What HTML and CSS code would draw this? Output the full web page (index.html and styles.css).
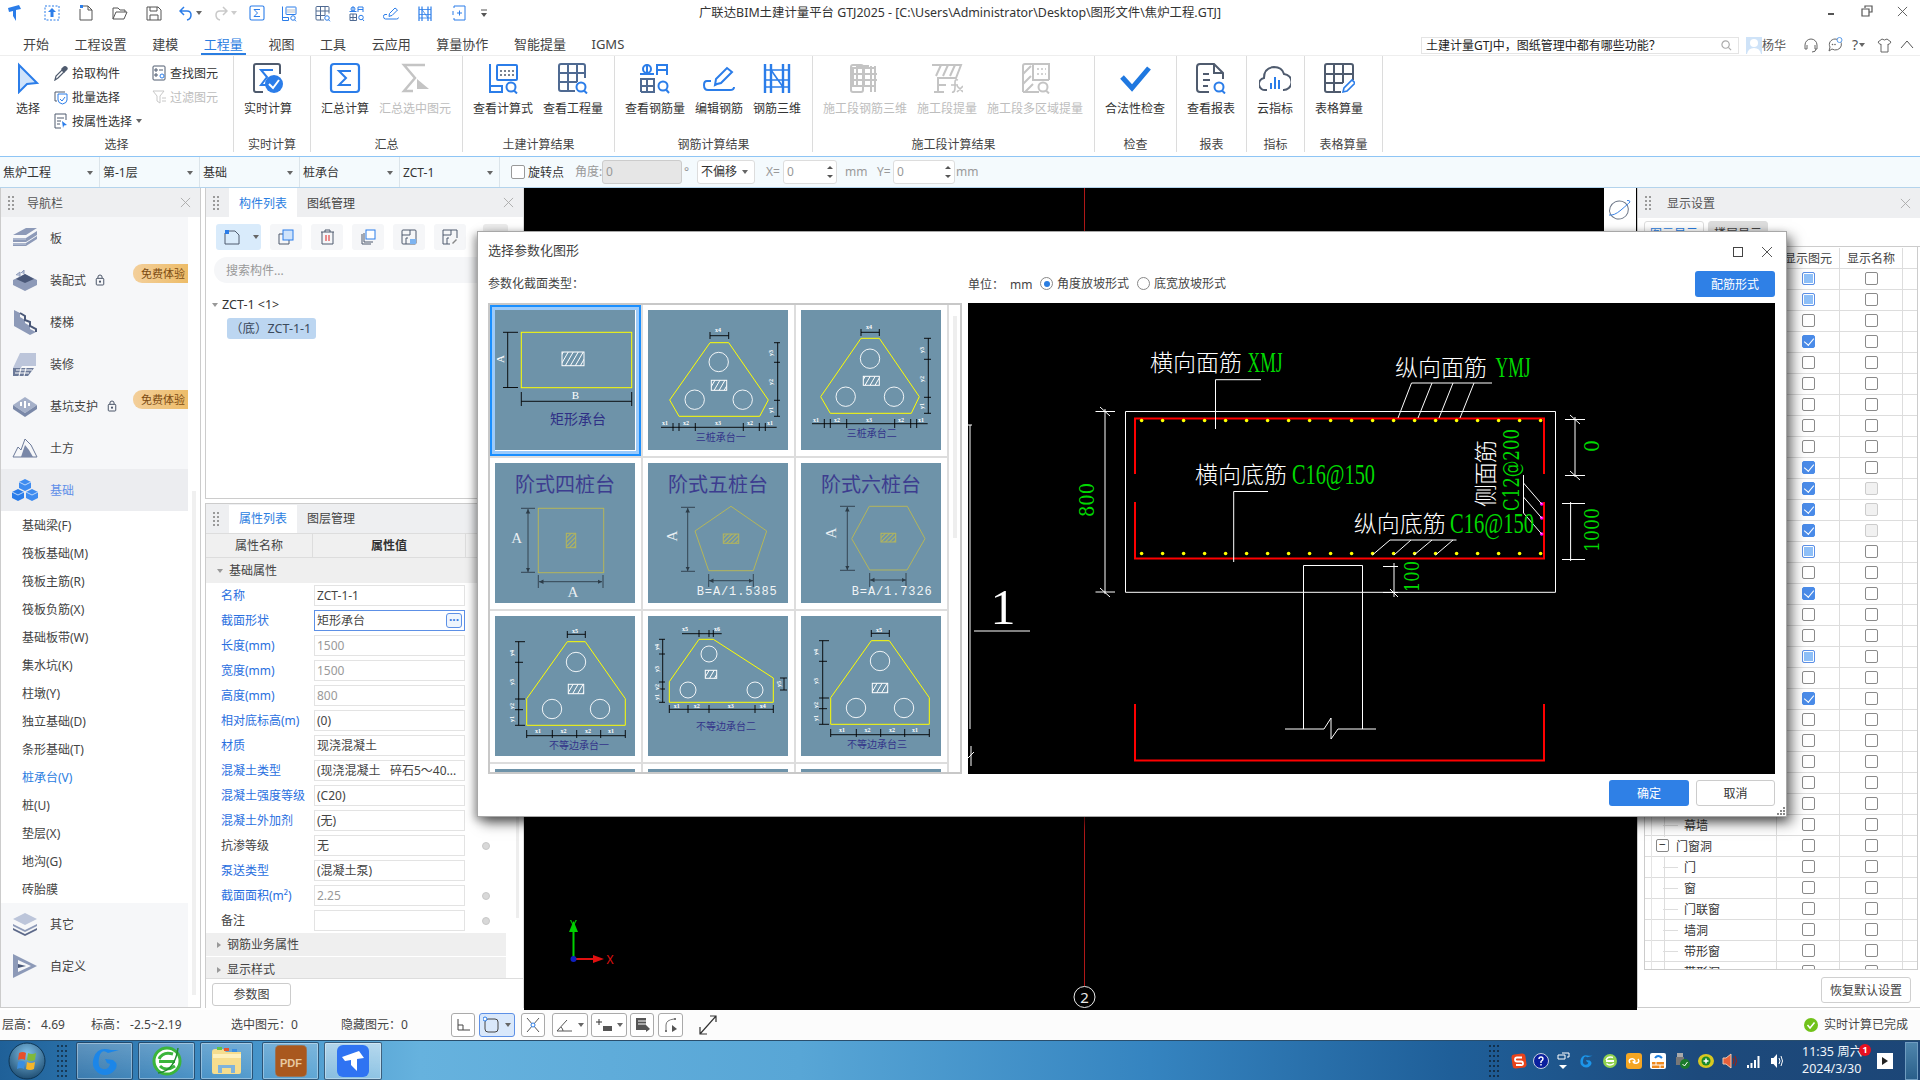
FILE: index.html
```html
<!DOCTYPE html>
<html lang="zh-CN">
<head>
<meta charset="utf-8">
<title>广联达BIM土建计量平台 GTJ2025</title>
<link rel="stylesheet" href="styles.css">
</head>
<body>
<svg class="defs" width="0" height="0">
  <defs>
    <pattern id="hp" width="5" height="5" patternUnits="userSpaceOnUse" patternTransform="skewX(-30)"><rect width="5" height="5" fill="none"/><path d="M2.5 0V5" stroke="#fff" stroke-width="1"/></pattern>
    <pattern id="hy" width="3" height="3" patternUnits="userSpaceOnUse" patternTransform="rotate(45)"><path d="M1.5 0V3" stroke="#b4b65a" stroke-width="1"/></pattern>
    <marker id="ar" markerWidth="6" markerHeight="6" refX="5" refY="3" orient="auto-start-reverse"><path d="M0 .5L5 3L0 5.5z" fill="#2c3c48"/></marker>
    <symbol id="i-sum" viewBox="0 0 32 32"><rect x="2" y="2" width="28" height="28" rx="3" fill="none" stroke="#2b7de9" stroke-width="2.2"/><path d="M22 9H10L17 16L10 23H22" fill="none" stroke="#2b7de9" stroke-width="2"/></symbol>
    <symbol id="i-calc" viewBox="0 0 32 32"><path d="M3 2V30H15V24H3" fill="none" stroke="#2b7de9" stroke-width="2"/><rect x="10" y="3" width="20" height="15" rx="1" fill="none" stroke="#2b7de9" stroke-width="2"/><path d="M13 9H27M13 13H27" stroke="#4f5b6e" stroke-width="1.6" stroke-dasharray="2 2"/><circle cx="24" cy="25" r="4.5" fill="#fff" stroke="#2b7de9" stroke-width="2"/><path d="M27 28.5L30 31.5" stroke="#2b7de9" stroke-width="2"/></symbol>
    <symbol id="i-grid" viewBox="0 0 32 32"><path d="M18 29H4Q2 29 2 27V4Q2 2 4 2H26Q28 2 28 4V16M2 11H28M2 20H20M11 2V29M20 2V20" fill="none" stroke="#4f6a92" stroke-width="2"/><circle cx="24" cy="25" r="4.5" fill="#fff" stroke="#2b7de9" stroke-width="2"/><path d="M27 28.5L30 31.5" stroke="#2b7de9" stroke-width="2"/></symbol>
    <symbol id="i-rq" viewBox="0 0 32 32"><circle cx="8" cy="7" r="4" fill="none" stroke="#2b7de9" stroke-width="2"/><path d="M1 12H15M8 2V12M18 13V3H28V13M18 8H28" fill="none" stroke="#2b7de9" stroke-width="2"/><path d="M2 30V17H15V30H2M2 24H15M8 17V30" fill="none" stroke="#4f6a92" stroke-width="2"/><circle cx="24" cy="24" r="4.5" fill="#fff" stroke="#2b7de9" stroke-width="2"/><path d="M27 27.5L30 31" stroke="#2b7de9" stroke-width="2"/></symbol>
    <symbol id="i-pen" viewBox="0 0 32 32"><path d="M14 22L12 23L13 17L24 6L29 10L18 21z" fill="none" stroke="#2b7de9" stroke-width="2"/><path d="M8 19H4Q1 19 1 23Q1 28 5 28H27Q31 28 31 25" fill="none" stroke="#2b7de9" stroke-width="2"/></symbol>
    <symbol id="i-r3d" viewBox="0 0 32 32"><path d="M4 2V31M28 2V31M10 2V31M22 2V31" fill="none" stroke="#2b7de9" stroke-width="2.4"/><path d="M4 8H28M4 18H28M4 25H28M10 8L22 25" fill="none" stroke="#2b7de9" stroke-width="1.6"/></symbol>
    <symbol id="i-cube" viewBox="0 0 32 32"><path d="M4 6H26V24H4zM8 24V4H20M4 12H28M4 18H28M15 6V24M22 4V30M26 4V30" fill="none" stroke="#c4c4c4" stroke-width="2"/><rect x="2" y="3" width="12" height="27" rx="2" fill="none" stroke="#c4c4c4" stroke-width="2"/></symbol>
    <symbol id="i-fx" viewBox="0 0 32 32"><path d="M1 3H30L25 16H7V30M3 30H13M10 3L5 14M17 3L12 14M24 3L19 14M7 23H15" fill="none" stroke="#c4c4c4" stroke-width="2"/><path d="M21 30Q24 31 24 25V20Q24 17 27 18M20 23H27M26 24L32 30M32 24L26 30" fill="none" stroke="#c4c4c4" stroke-width="1.6"/></symbol>
    <symbol id="i-multi" viewBox="0 0 32 32"><path d="M4 30V4Q4 2 6 2H30V18M4 30H20M14 2V18H30" fill="none" stroke="#c4c4c4" stroke-width="2"/><path d="M4 12L12 4M4 22L12 14M6 30L14 22" stroke="#c4c4c4" stroke-width="2"/><path d="M18 7H27M18 12H27" stroke="#c4c4c4" stroke-width="1.6" stroke-dasharray="2 2"/><circle cx="24" cy="25" r="4.5" fill="#fff" stroke="#c4c4c4" stroke-width="2"/><path d="M27 28.5L30 31.5" stroke="#c4c4c4" stroke-width="2"/></symbol>
    <symbol id="i-x" viewBox="0 0 12 12"><path d="M1 1L11 11M11 1L1 11" stroke="currentColor" stroke-width="1" fill="none"/></symbol>
    <symbol id="i-grip" viewBox="0 0 8 16"><path d="M1 1h2v2H1zM5 1h2v2H5zM1 5h2v2H1zM5 5h2v2H5zM1 9h2v2H1zM5 9h2v2H5zM1 13h2v2H1zM5 13h2v2H5z" fill="#9a9a9a"/></symbol>
    <symbol id="i-mag" viewBox="0 0 12 12"><circle cx="5" cy="5" r="4" fill="none" stroke="currentColor" stroke-width="1.3"/><path d="M8 8L11 11" stroke="currentColor" stroke-width="1.3"/></symbol>
    <symbol id="i-lock" viewBox="0 0 12 14"><rect x="1.5" y="5" width="9" height="8" rx="1" fill="none" stroke="#4a5568" stroke-width="1.2"/><path d="M3.5 5V3.5Q3.5 1 6 1T8.500 3.500V5" fill="none" stroke="#4a5568" stroke-width="1.200"/><circle cx="6" cy="9" r="1.300" fill="#4a5568"/></symbol>
    <g id="t-uneq">
      <polygon class="y" points="72.3,25.700 90.300,25.700 130.300,82.700 130.300,109.300 31.700,109.300 31.700,82.700"/>
      <circle class="w" cx="81" cy="46" r="9.700"/><circle class="w" cx="57" cy="93" r="9.700"/><circle class="w" cx="105" cy="93" r="9.700"/>
      <rect x="73.300" y="68.300" width="15.400" height="9.400" fill="url(#hp)" stroke="#fff"/>
      <path class="k" d="M72.300 18.300H90.300M72.300 15V22M90.300 15V22M23.700 25.700V109.300M20 25.700H30M20 46.300H28M20 83H30M20 93.700H28M20 109.300H30M31.700 119.700H130.300M31.700 114V122M57.300 114V122M81.700 114V122M105.700 114V122M130.300 114V122"/>
      <text class="tx" x="80" y="17" text-anchor="middle">x5</text>
      <text class="tx" x="43" y="116.500" text-anchor="middle">x1</text><text class="tx" x="68.500" y="116.500" text-anchor="middle">x2</text><text class="tx" x="93" y="116.500" text-anchor="middle">x2</text><text class="tx" x="116" y="116.500" text-anchor="middle">x1</text>
      <text class="tx" transform="rotate(-90 19 37)" x="19" y="37" text-anchor="middle">y4</text><text class="tx" transform="rotate(-90 19 66)" x="19" y="66" text-anchor="middle">y3</text><text class="tx" transform="rotate(-90 19 90)" x="19" y="90" text-anchor="middle">y2</text><text class="tx" transform="rotate(-90 19 103)" x="19" y="103" text-anchor="middle">y1</text>
    </g>
  </defs>
</svg>

<div class="app">
  <header class="titlebar">
    <div class="quick">
      <span class="qi q-logo"><svg width="18" height="18" viewBox="0 0 18 18"><path d="M2 4L13 1L15 5L10 6V17L7 12V7L3 8z" fill="#2b7de9"/></svg></span>
      <span class="qi"><svg width="16" height="18" viewBox="0 0 16 18"><rect x="1" y="2" width="14" height="14" fill="none" stroke="#2b7de9" stroke-dasharray="2 1.500"/><path d="M8 4L4 8H6.500V13H9.500V8H12z" fill="#2b7de9"/></svg></span>
      <span class="qi"><svg width="16" height="18" viewBox="0 0 16 18"><path d="M5 2H10L14 6V16H2V5" fill="none" stroke="#555"/><path d="M10 2V6H14" fill="none" stroke="#555"/><rect x="2" y="1" width="3" height="3" fill="#2b7de9"/></svg></span>
      <span class="qi"><svg width="16" height="16" viewBox="0 0 16 16"><path d="M1 14V3H6L8 5H13V7M1 14L4 7H15L12 14z" fill="none" stroke="#555"/></svg></span>
      <span class="qi"><svg width="16" height="16" viewBox="0 0 16 16"><path d="M1 2H12L15 5V15H1z" fill="none" stroke="#555"/><path d="M4 2V6H11V2M4 15V10H12V15" fill="none" stroke="#555"/></svg></span>
      <span class="qi q-undo"><svg width="14" height="16" viewBox="0 0 14 16"><path d="M5 2L1 6L5 10M1 6H8Q12 6 12 10T8 15" fill="none" stroke="#2b7de9" stroke-width="1.500"/></svg><i class="caret"></i></span>
      <span class="qi q-redo"><svg width="14" height="16" viewBox="0 0 14 16"><path d="M9 2L13 6L9 10M13 6H6Q2 6 2 10T6 15" fill="none" stroke="#c9c9c9" stroke-width="1.500"/></svg><i class="caret lt"></i></span>
      <span class="qi q-sum"><svg width="16" height="16"><use href="#i-sum"/></svg></span>
      <span class="qi"><svg width="16" height="17"><use href="#i-calc"/></svg></span>
      <span class="qi"><svg width="16" height="17"><use href="#i-grid"/></svg></span>
      <span class="qi"><svg width="16" height="17"><use href="#i-rq"/></svg></span>
      <span class="qi"><svg width="16" height="16"><use href="#i-pen"/></svg></span>
      <span class="qi"><svg width="16" height="17"><use href="#i-r3d"/></svg></span>
      <span class="qi"><svg width="15" height="17" viewBox="0 0 15 17"><path d="M2 3V1H13V15H2V13M1 6V10M5 8H10M7.500 5.500V10.500" fill="none" stroke="#2b7de9"/></svg></span>
      <span class="qi q-drop"><svg width="8" height="9" viewBox="0 0 8 9"><path d="M1 1H7" stroke="#555"/><path d="M1 4H7L4 8z" fill="#555"/></svg></span>
    </div>
    <div class="title">广联达BIM土建计量平台 GTJ2025 - [C:\Users\Administrator\Desktop\图形文件\焦炉工程.GTJ]</div>
    <div class="winctl">
      <span class="wc"><svg width="12" height="12" viewBox="0 0 12 12"><path d="M2 9H8" stroke="#555" stroke-width="2"/></svg></span>
      <span class="wc"><svg width="12" height="12" viewBox="0 0 12 12"><path d="M4 3V1H11V7H8M1 4H8V11H1z" fill="none" stroke="#555" stroke-width="1.200"/></svg></span>
      <span class="wc"><svg width="11" height="11"><use href="#i-x"/></svg></span>
    </div>
  </header>

  <nav class="menubar">
    <a class="tab">开始</a><a class="tab">工程设置</a><a class="tab">建模</a><a class="tab on">工程量</a><a class="tab">视图</a><a class="tab">工具</a><a class="tab">云应用</a><a class="tab">算量协作</a><a class="tab">智能提量</a><a class="tab">IGMS</a>
    <div class="mright">
      <div class="topsearch"><span>土建计量GTJ中，图纸管理中都有哪些功能？</span><svg class="mg" width="11" height="11"><use href="#i-mag"/></svg></div>
      <span class="avatar"><svg width="16" height="17" viewBox="0 0 16 17"><rect width="16" height="17" fill="#cfe3f8"/><circle cx="8" cy="6" r="4" fill="#fff"/><path d="M1 17Q2 11 8 11T15 17z" fill="#fff"/></svg></span>
      <span class="uname">杨华</span>
      <svg class="mi m1" width="16" height="16" viewBox="0 0 16 16"><path d="M2 9V8A6 6 0 0 1 14 8V9M2 9V12H4V8M14 9V12H12V8M13 12Q13 15 9 15" fill="none" stroke="#666"/></svg>
      <svg class="mi m2" width="16" height="16" viewBox="0 0 16 16"><path d="M8 2A6 5.500 0 1 1 5 12L2 14L3 10A6 5.500 0 0 1 8 2z" fill="none" stroke="#666"/><circle cx="5.500" cy="7.500" r=".8" fill="#666"/><circle cx="8" cy="7.500" r=".8" fill="#666"/><circle cx="12.500" cy="3" r="2.500" fill="#fff" stroke="#5a9be8"/></svg>
      <span class="mhelp">?<i class="caret"></i></span>
      <svg class="mi m3" width="15" height="15" viewBox="0 0 15 15"><path d="M5 1L1 4L3 6.500L4 6V14H11V6L12 6.500L14 4L10 1Q7.500 3 5 1z" fill="none" stroke="#666"/></svg>
      <svg class="mi m4" width="14" height="14" viewBox="0 0 14 14"><path d="M1 10L7 3L13 10" fill="none" stroke="#555"/></svg>
    </div>
  </nav>

  <section class="ribbon">
    <div class="grp g1">
      <div class="grp-body">
        <div class="rb rb-sel"><svg width="24" height="32" viewBox="0 0 24 32"><path d="M3 3L21 21L11 22L3 30z" fill="#cfe3fb" stroke="#2b7de9" stroke-width="2"/></svg><span>选择</span></div>
        <div class="smcol">
          <div class="sm"><svg width="14" height="16" viewBox="0 0 14 16"><path d="M1 15L2 11L8 5L10 7L4 13z" fill="none" stroke="#4f5b6e" stroke-width="1.200"/><path d="M7 4L9 2Q11 0 13 2T12 6L10 8z" fill="#4f5b6e"/></svg><span>拾取构件</span></div>
          <div class="sm"><svg width="14" height="16" viewBox="0 0 14 16"><path d="M11 3H1V12H3" fill="none" stroke="#4f5b6e"/><path d="M4 5H13V11Q13 14 8.500 15Q4 14 4 11z" fill="none" stroke="#2b7de9"/><path d="M6 10L8 12L11 8" fill="none" stroke="#2b7de9"/></svg><span>批量选择</span></div>
          <div class="sm"><svg width="14" height="16" viewBox="0 0 14 16"><path d="M12 7V1H1V15H7" fill="none" stroke="#4f5b6e"/><path d="M3 5H10M3 8H7M3 11H6" stroke="#4f5b6e"/><path d="M8 8L13 12L10 12.500L9 15z" fill="#2b7de9"/></svg><span>按属性选择</span><i class="caret"></i></div>
        </div>
        <div class="smcol">
          <div class="sm"><svg width="14" height="16" viewBox="0 0 14 16"><rect x="1" y="1" width="12" height="14" rx="1" fill="none" stroke="#4f5b6e"/><path d="M3 4H5V6H3zM7 5H11M3 9H5V11H3z" fill="none" stroke="#4f5b6e"/><circle cx="10" cy="11" r="2" fill="#fff" stroke="#2b7de9"/></svg><span>查找图元</span></div>
          <div class="sm off"><svg width="14" height="16" viewBox="0 0 14 16"><path d="M1 2H12L8 7V14L5 12V7z" fill="none" stroke="#c8c8c8"/><path d="M10 9H14M10 12H14" stroke="#c8c8c8"/></svg><span>过滤图元</span></div>
        </div>
      </div>
      <div class="grp-name">选择</div>
    </div>
    <div class="grp g2">
      <div class="grp-body">
        <div class="rb"><svg width="32" height="32" viewBox="0 0 32 32"><path d="M11 30H4Q2 30 2 28V4Q2 2 4 2H26Q28 2 28 4V12" fill="none" stroke="#4f5b6e" stroke-width="2"/><path d="M21 8H9L15 15L9 23H14" fill="none" stroke="#2b7de9" stroke-width="2"/><circle cx="22" cy="22" r="9" fill="#2b7de9"/><path d="M17 22L21 26L27 18" fill="none" stroke="#fff" stroke-width="2"/></svg><span>实时计算</span></div>
      </div>
      <div class="grp-name">实时计算</div>
    </div>
    <div class="grp g3">
      <div class="grp-body">
        <div class="rb"><svg width="32" height="32"><use href="#i-sum"/></svg><span>汇总计算</span></div>
        <div class="rb off"><svg width="32" height="32" viewBox="0 0 32 32"><path d="M26 3H5L16 16L5 29H14" fill="none" stroke="#c4c4c4" stroke-width="2.500"/><path d="M18 17L30 27H18z" fill="#c4c4c4"/></svg><span>汇总选中图元</span></div>
      </div>
      <div class="grp-name">汇总</div>
    </div>
    <div class="grp g4">
      <div class="grp-body">
        <div class="rb"><svg width="32" height="32"><use href="#i-calc"/></svg><span>查看计算式</span></div>
        <div class="rb"><svg width="32" height="32"><use href="#i-grid"/></svg><span>查看工程量</span></div>
      </div>
      <div class="grp-name">土建计算结果</div>
    </div>
    <div class="grp g5">
      <div class="grp-body">
        <div class="rb"><svg width="32" height="32"><use href="#i-rq"/></svg><span>查看钢筋量</span></div>
        <div class="rb"><svg width="32" height="32"><use href="#i-pen"/></svg><span>编辑钢筋</span></div>
        <div class="rb"><svg width="32" height="32"><use href="#i-r3d"/></svg><span>钢筋三维</span></div>
      </div>
      <div class="grp-name">钢筋计算结果</div>
    </div>
    <div class="grp g6">
      <div class="grp-body">
        <div class="rb off"><svg width="32" height="32"><use href="#i-cube"/></svg><span>施工段钢筋三维</span></div>
        <div class="rb off"><svg width="32" height="32"><use href="#i-fx"/></svg><span>施工段提量</span></div>
        <div class="rb off"><svg width="32" height="32"><use href="#i-multi"/></svg><span>施工段多区域提量</span></div>
      </div>
      <div class="grp-name">施工段计算结果</div>
    </div>
    <div class="grp g7">
      <div class="grp-body">
        <div class="rb"><svg width="32" height="32" viewBox="0 0 32 32"><path d="M3 15L13 26L30 6" fill="none" stroke="#1f78e0" stroke-width="5"/></svg><span>合法性检查</span></div>
      </div>
      <div class="grp-name">检查</div>
    </div>
    <div class="grp g8">
      <div class="grp-body">
        <div class="rb"><svg width="32" height="32" viewBox="0 0 32 32"><path d="M14 30H5Q2 30 2 27V5Q2 2 5 2H19L28 11V17M19 2V11H28M8 12H14M8 18H15M8 24H13" fill="none" stroke="#4f5b6e" stroke-width="2"/><circle cx="24" cy="25" r="4.500" fill="#fff" stroke="#2b7de9" stroke-width="2"/><path d="M27 28.500L30 31.500" stroke="#2b7de9" stroke-width="2"/></svg><span>查看报表</span></div>
      </div>
      <div class="grp-name">报表</div>
    </div>
    <div class="grp g9">
      <div class="grp-body">
        <div class="rb"><svg width="32" height="32" viewBox="0 0 32 32"><path d="M8 28H7A6 6 0 0 1 5 16Q5 6 15 5Q23 5 25 12A8 8 0 0 1 24 28" fill="none" stroke="#4f5b6e" stroke-width="2"/><path d="M12 27V21M16 27V15M20 27V18" stroke="#2b7de9" stroke-width="2"/></svg><span>云指标</span></div>
      </div>
      <div class="grp-name">指标</div>
    </div>
    <div class="grp g10">
      <div class="grp-body">
        <div class="rb"><svg width="32" height="32" viewBox="0 0 32 32"><path d="M18 30H4Q2 30 2 28V4Q2 2 4 2H28Q30 2 30 4V18M2 12H30M2 21H20M11 2V30M20 2V21" fill="none" stroke="#4f5b6e" stroke-width="2"/><path d="M20 30L21 26L29 18L32 21L24 29z" fill="#fff" stroke="#2b7de9" stroke-width="1.600"/></svg><span>表格算量</span></div>
      </div>
      <div class="grp-name">表格算量</div>
    </div>
  </section>

  <section class="toolbar">
    <div class="combo"><span>焦炉工程</span><i class="caret"></i></div>
    <div class="combo"><span>第-1层</span><i class="caret"></i></div>
    <div class="combo"><span>基础</span><i class="caret"></i></div>
    <div class="combo"><span>桩承台</span><i class="caret"></i></div>
    <div class="combo"><span>ZCT-1</span><i class="caret"></i></div>
    <i class="tb-check"></i><span class="tb-l1">旋转点</span>
    <span class="tb-l2">角度:</span><div class="tb-in dis">0</div><span class="tb-deg">°</span>
    <div class="tb-sel"><span>不偏移</span><i class="caret"></i></div>
    <span class="tb-x">X=</span><div class="tb-in sp sx"><span>0</span><i class="spin"></i></div><span class="tb-mm">mm</span>
    <span class="tb-y">Y=</span><div class="tb-in sp sy"><span>0</span><i class="spin"></i></div><span class="tb-mm2">mm</span>
  </section>

  <main class="workspace">
    <aside class="nav">
      <div class="pnl-head"><svg class="grip" width="8" height="16"><use href="#i-grip"/></svg><span class="pnl-title">导航栏</span><svg class="pclose" width="11" height="11"><use href="#i-x"/></svg></div>
      <div class="nav-body">
        <div class="nav-list">
          <div class="nv"><svg width="26" height="24" viewBox="0 0 26 24"><path d="M1 9L14 2H25L14 9zM1 12H14L25 5V9L14 16H1zM1 17H14L25 10V13L14 20H1z" fill="#8d9ab8"/><path d="M1 13H14M1 18H14" stroke="#c8d0e0"/></svg><span>板</span></div>
          <div class="nv"><svg width="26" height="24" viewBox="0 0 26 24"><path d="M1 12L13 6L25 12V17L13 23L1 17z" fill="#8d9ab8"/><path d="M4 11L13 6L22 11L13 15z" fill="#4a5878"/><path d="M4 7L8 4V9M9 5L12 2V6" fill="#b8c2d8" stroke="#8d9ab8"/></svg><span>装配式</span><svg class="lock" width="10" height="12"><use href="#i-lock"/></svg><b class="trial">免费体验</b></div>
          <div class="nv"><svg width="26" height="26" viewBox="0 0 26 26"><path d="M2 1L8 4V8L13 11V14L18 17V20L24 23L18 26L2 17z" fill="#8d9ab8"/><path d="M8 4L13 7V11L18 13V17L24 20V23" fill="none" stroke="#4a5878" stroke-width="2"/></svg><span>楼梯</span></div>
          <div class="nv"><svg width="26" height="24" viewBox="0 0 26 24"><path d="M1 16L8 1H24V14H10L4 24H1z" fill="#bcc5da"/><path d="M1 16H22L16 24H1z" fill="#6c7a99"/><path d="M4 18H20M3 21H17M9 16L7 24M14 16L12 24" stroke="#fff"/></svg><span>装修</span></div>
          <div class="nv"><svg width="26" height="24" viewBox="0 0 26 24"><path d="M1 11L13 3L25 11L13 19z" fill="#a5b0c9"/><path d="M1 11V15L13 23V19zM25 11V15L13 23V19z" fill="#7a88a8"/><path d="M9 12V8M13 14V7M17 12V9" stroke="#fff" stroke-width="2"/></svg><span>基坑支护</span><svg class="lock" width="10" height="12"><use href="#i-lock"/></svg><b class="trial">免费体验</b></div>
          <div class="nv"><svg width="26" height="22" viewBox="0 0 26 22"><path d="M1 20L6 10L9 13L13 2L19 8L25 20z" fill="none" stroke="#6c7a99"/><path d="M9 20L13 8L17 13L21 20z" fill="#7a88a8"/></svg><span>土方</span></div>
          <div class="nv cur"><svg width="26" height="24" viewBox="0 0 26 24"><path d="M13 1L19 4V10L13 13L7 10V4z" fill="#3f8cf0"/><path d="M6 11L12 14V20L6 23L0 20V14z" fill="#2b7de9"/><path d="M20 11L26 14V20L20 23L14 20V14z" fill="#3f8cf0"/><path d="M7 4L13 7L19 4M0 14L6 17L12 14M14 14L20 17L26 14" fill="none" stroke="#bcd8fb"/></svg><span>基础</span></div>
          <div class="sub">基础梁(F)</div><div class="sub">筏板基础(M)</div><div class="sub">筏板主筋(R)</div><div class="sub">筏板负筋(X)</div><div class="sub">基础板带(W)</div><div class="sub">集水坑(K)</div><div class="sub">柱墩(Y)</div><div class="sub">独立基础(D)</div><div class="sub">条形基础(T)</div><div class="sub act">桩承台(V)</div><div class="sub">桩(U)</div><div class="sub">垫层(X)</div><div class="sub">地沟(G)</div><div class="sub">砖胎膜</div>
          <div class="nv"><svg width="26" height="24" viewBox="0 0 26 24"><path d="M1 7L13 1L25 7L13 13z" fill="#bcc5da"/><path d="M1 12L13 18L25 12L25 14L13 20L1 14z" fill="#8d9ab8"/><path d="M1 16L13 22L25 16V18L13 24L1 18z" fill="#5d6a8a"/></svg><span>其它</span></div>
          <div class="nv"><svg width="26" height="26" viewBox="0 0 26 26"><path d="M1 1L25 13L1 25z" fill="#8d9ab8"/><path d="M6 7L19 13L6 19z" fill="#f6f7f9"/><path d="M6 11L14 13L6 15z" fill="#4a5878"/></svg><span>自定义</span></div>
        </div>
        <div class="vtrack"></div>
      </div>
    </aside>

    <div class="midcol">
      <section class="pa">
        <div class="pnl-head tabs"><svg class="grip" width="8" height="16"><use href="#i-grip"/></svg><span class="ptab on">构件列表</span><span class="ptab">图纸管理</span><svg class="pclose" width="11" height="11"><use href="#i-x"/></svg></div>
        <div class="tools">
          <div class="tbtn new"><svg width="16" height="16" viewBox="0 0 16 16"><path d="M4 2H11L15 6V15H1V4" fill="none" stroke="#4f5b6e"/><rect x="1" y="1" width="4" height="4" fill="#2b7de9"/></svg><i class="caret"></i></div>
          <div class="tbtn"><svg width="16" height="16" viewBox="0 0 16 16"><path d="M5 5H1V15H11V11" fill="none" stroke="#4f5b6e"/><rect x="5" y="1" width="10" height="10" fill="#cfe3fb" stroke="#2b7de9"/></svg></div>
          <div class="tbtn"><svg width="15" height="16" viewBox="0 0 15 16"><path d="M1 3H14M5 3V1H10V3M2 3V15H13V3" fill="none" stroke="#4f5b6e"/><path d="M6 6V12M9 6V12" stroke="#e02020"/></svg></div>
          <div class="tbtn"><svg width="16" height="16" viewBox="0 0 16 16"><path d="M2 5V15H11M4 4V13H13" fill="none" stroke="#4f5b6e"/><rect x="6" y="1" width="9" height="9" fill="#fff" stroke="#2b7de9"/></svg></div>
          <div class="tbtn"><svg width="16" height="16" viewBox="0 0 16 16"><rect x="1" y="1" width="14" height="14" rx="1" fill="none" stroke="#4f5b6e"/><path d="M1 6H9V1M5 15V9H7" fill="none" stroke="#4f5b6e"/><rect x="9" y="10" width="6" height="5" fill="#7eb4f0"/></svg></div>
          <div class="tbtn"><svg width="16" height="16" viewBox="0 0 16 16"><path d="M15 9V1H1V15H8" fill="none" stroke="#4f5b6e"/><path d="M1 6H9V1M5 15V9H7" fill="none" stroke="#4f5b6e"/><path d="M10 14L14 10L15 11L11 15z" fill="#888"/></svg></div>
          <div class="tbtn extra"></div>
        </div>
        <div class="csearch">搜索构件...</div>
        <div class="tree-root"><i class="tri"></i><span>ZCT-1 &lt;1&gt;</span></div>
        <div class="pill">（底）ZCT-1-1</div>
      </section>
      <section class="pb">
        <div class="pnl-head tabs"><svg class="grip" width="8" height="16"><use href="#i-grip"/></svg><span class="ptab on">属性列表</span><span class="ptab">图层管理</span></div>
        <div class="ptable">
          <div class="phead"><span>属性名称</span><b>属性值</b></div>
          <div class="sect"><i class="tri"></i>基础属性</div>
          <div class="prow"><label class="bl">名称</label><div class="pv">ZCT-1-1</div></div>
          <div class="prow"><label class="bl">截面形状</label><div class="pv sel"><span>矩形承台</span><em>···</em></div></div>
          <div class="prow"><label class="bl">长度(mm)</label><div class="pv gr">1500</div></div>
          <div class="prow"><label class="bl">宽度(mm)</label><div class="pv gr">1500</div></div>
          <div class="prow"><label class="bl">高度(mm)</label><div class="pv gr">800</div></div>
          <div class="prow"><label class="bl">相对底标高(m)</label><div class="pv">(0)</div></div>
          <div class="prow"><label class="bl">材质</label><div class="pv">现浇混凝土</div></div>
          <div class="prow"><label class="bl">混凝土类型</label><div class="pv">(现浇混凝土&nbsp;&nbsp;&nbsp;碎石5～40...</div></div>
          <div class="prow"><label class="bl">混凝土强度等级</label><div class="pv">(C20)</div></div>
          <div class="prow"><label class="bl">混凝土外加剂</label><div class="pv">(无)</div></div>
          <div class="prow"><label>抗渗等级</label><div class="pv">无</div><i class="dot"></i></div>
          <div class="prow"><label class="bl">泵送类型</label><div class="pv">(混凝土泵)</div></div>
          <div class="prow"><label class="bl">截面面积(m²)</label><div class="pv gr">2.25</div><i class="dot"></i></div>
          <div class="prow"><label>备注</label><div class="pv"></div><i class="dot"></i></div>
          <div class="sect s2"><i class="tri r"></i>钢筋业务属性</div>
          <div class="sect s3"><i class="tri r"></i>显示样式</div>
        </div>
        <div class="pb-foot"><button class="pbtn">参数图</button></div>
      </section>
    </div>

    <div class="canvas">
      <svg class="cv" width="1113" height="822" viewBox="524 188 1113 822">
        <path d="M1084.500 188V986" stroke="#b01818" stroke-width="1"/>
        <circle cx="1084.500" cy="997" r="10.500" fill="none" stroke="#e8e8e8"/>
        <text class="cv2" x="1084.500" y="1002.500" text-anchor="middle">2</text>
        <path d="M573.500 958V928" stroke="#00d000" stroke-width="2"/><path d="M573.500 921L569 932H578z" fill="#00d000"/>
        <path d="M573 959H597" stroke="#e01010" stroke-width="2"/><path d="M604 959L593 955V963z" fill="#e01010"/>
        <circle cx="573.500" cy="959" r="3" fill="#1020c0"/>
        <text class="cvy" x="573.500" y="929" text-anchor="middle">Y</text><text class="cvx" x="610" y="964" text-anchor="middle">X</text>
      </svg>
      <div class="side"><svg width="24" height="24" viewBox="0 0 24 24"><ellipse cx="12" cy="12" rx="9.500" ry="9" transform="rotate(-25 12 12)" fill="none" stroke="#6a7485"/><path d="M2 17Q7 18 14 12T23 4Q23 2 20 2.500" fill="none" stroke="#3b83e6"/></svg></div>
    </div>

    <aside class="rpanel">
      <div class="pnl-head"><svg class="grip" width="8" height="16"><use href="#i-grip"/></svg><span class="pnl-title rt">显示设置</span><svg class="pclose" width="11" height="11"><use href="#i-x"/></svg></div>
      <div class="rtabs"><span class="rtab on">图元显示</span><span class="rtab">楼层显示</span></div>
      <div class="rtable">
        <div class="rt-head"><span></span><span>显示图元</span><span>显示名称</span></div>
        <div class="tr"><i></i><b class="cb mix"></b><b class="cb"></b></div>
        <div class="tr"><i></i><b class="cb mix"></b><b class="cb"></b></div>
        <div class="tr"><i></i><b class="cb"></b><b class="cb"></b></div>
        <div class="tr"><i></i><b class="cb on"></b><b class="cb"></b></div>
        <div class="tr"><i></i><b class="cb"></b><b class="cb"></b></div>
        <div class="tr"><i></i><b class="cb"></b><b class="cb"></b></div>
        <div class="tr"><i></i><b class="cb"></b><b class="cb"></b></div>
        <div class="tr"><i></i><b class="cb"></b><b class="cb"></b></div>
        <div class="tr"><i></i><b class="cb"></b><b class="cb"></b></div>
        <div class="tr"><i></i><b class="cb on"></b><b class="cb"></b></div>
        <div class="tr"><i></i><b class="cb on"></b><b class="cb lt"></b></div>
        <div class="tr"><i></i><b class="cb on"></b><b class="cb lt"></b></div>
        <div class="tr"><i></i><b class="cb on"></b><b class="cb lt"></b></div>
        <div class="tr"><i></i><b class="cb mix"></b><b class="cb"></b></div>
        <div class="tr"><i></i><b class="cb"></b><b class="cb"></b></div>
        <div class="tr"><i></i><b class="cb on"></b><b class="cb"></b></div>
        <div class="tr"><i></i><b class="cb"></b><b class="cb"></b></div>
        <div class="tr"><i></i><b class="cb"></b><b class="cb"></b></div>
        <div class="tr"><i></i><b class="cb mix"></b><b class="cb"></b></div>
        <div class="tr"><i></i><b class="cb"></b><b class="cb"></b></div>
        <div class="tr"><i></i><b class="cb on"></b><b class="cb"></b></div>
        <div class="tr"><i></i><b class="cb"></b><b class="cb"></b></div>
        <div class="tr"><i></i><b class="cb"></b><b class="cb"></b></div>
        <div class="tr"><i></i><b class="cb"></b><b class="cb"></b></div>
        <div class="tr"><i></i><b class="cb"></b><b class="cb"></b></div>
        <div class="tr"><i></i><b class="cb"></b><b class="cb"></b></div>
        <div class="tr leaf"><i>幕墙</i><b class="cb"></b><b class="cb"></b></div>
        <div class="tr fold"><i><u>−</u>门窗洞</i><b class="cb"></b><b class="cb"></b></div>
        <div class="tr leaf"><i>门</i><b class="cb"></b><b class="cb"></b></div>
        <div class="tr leaf"><i>窗</i><b class="cb"></b><b class="cb"></b></div>
        <div class="tr leaf"><i>门联窗</i><b class="cb"></b><b class="cb"></b></div>
        <div class="tr leaf"><i>墙洞</i><b class="cb"></b><b class="cb"></b></div>
        <div class="tr leaf"><i>带形窗</i><b class="cb"></b><b class="cb"></b></div>
        <div class="tr leaf"><i>带形洞</i><b class="cb"></b><b class="cb"></b></div>
      </div>
      <div class="rfoot"><button class="rbtn">恢复默认设置</button></div>
    </aside>
  </main>

  <footer class="status">
    <span class="st s1">层高： 4.69</span><span class="st s2">标高： -2.5~2.19</span><span class="st s3">选中图元：0</span><span class="st s4">隐藏图元：0</span>
    <div class="stools">
      <span class="sbtn w24"><svg width="16" height="16" viewBox="0 0 16 16"><path d="M3 2V13H15M3 8H8V13" fill="none" stroke="#444"/></svg></span>
      <span class="sbtn sel w36"><svg width="18" height="18" viewBox="0 0 18 18"><rect x="2" y="3" width="13" height="13" rx="3" fill="none" stroke="#444"/><rect x="0" y="1" width="4" height="4" rx="2" fill="#fff" stroke="#2b7de9"/></svg><i class="caret"></i></span>
      <span class="sbtn w24 m6"><svg width="18" height="18" viewBox="0 0 18 18"><path d="M3 2L15 16M15 2L3 16" stroke="#555"/><circle cx="9" cy="9" r="2" fill="#fff" stroke="#2b7de9"/></svg></span>
      <span class="sbtn w36 m7"><svg width="18" height="16" viewBox="0 0 18 16"><path d="M1 14H16M1 14L11 3M5 10Q7 12 7 14" fill="none" stroke="#555"/></svg><i class="caret"></i></span>
      <span class="sbtn w36 m3"><svg width="18" height="16" viewBox="0 0 18 16"><path d="M4 2V8M1 5H7" stroke="#333"/><rect x="8" y="9" width="9" height="5" fill="#555"/></svg><i class="caret"></i></span>
      <span class="sbtn w24 m3"><svg width="16" height="18" viewBox="0 0 16 18"><rect x="2" y="2" width="10" height="12" fill="#555"/><path d="M4 5H12M4 8H12" stroke="#fff"/><path d="M12 9L16 13L12 16z" fill="#555"/></svg></span>
      <span class="sbtn w25 m4"><svg width="16" height="18" viewBox="0 0 16 18"><path d="M3 16V9Q3 4 11 3" fill="none" stroke="#777"/><path d="M9 9L14 13L9 16z" fill="#555"/><rect x="2" y="14" width="2" height="2" fill="#777"/><rect x="11" y="2" width="2" height="2" fill="#777"/></svg></span>
      <svg class="expand" width="18" height="20" viewBox="0 0 18 20"><path d="M1 19L17 1M11 1H17V7M1 12V19H8" fill="none" stroke="#333" stroke-width="1.200"/></svg>
    </div>
    <div class="done"><svg width="14" height="14" viewBox="0 0 14 14"><circle cx="7" cy="7" r="7" fill="#71c21a"/><path d="M3.500 7L6 10L10.500 4.500" fill="none" stroke="#fff" stroke-width="1.500"/></svg><span>实时计算已完成</span></div>
  </footer>

  <footer class="taskbar">
    <div class="orb"><svg width="38" height="38" viewBox="0 0 38 38"><defs><radialGradient id="og" cx=".5" cy=".3" r=".8"><stop offset="0" stop-color="#7fc0e8"/><stop offset="1" stop-color="#123e62"/></radialGradient></defs><circle cx="19" cy="19" r="18" fill="url(#og)" stroke="#0d3554"/><path d="M11 11Q15 9 18 11L17 18Q14 16 10 18z" fill="#e8502a"/><path d="M20 11Q24 13 28 11L27 18Q23 20 19 18z" fill="#7fb93c"/><path d="M10 20Q14 18 17 20L16 27Q13 25 9 27z" fill="#3b8ee0"/><path d="M19 20Q23 22 27 20L26 27Q22 29 18 27z" fill="#f4b52a"/></svg></div>
    <svg class="tdots" width="10" height="34" viewBox="0 0 10 34"><path d="M0 1h2v2H0zM4 1h2v2H4zM8 1h2v2H8zM0 6h2v2H0zM4 6h2v2H4zM8 6h2v2H8zM0 11h2v2H0zM4 11h2v2H4zM8 11h2v2H8zM0 16h2v2H0zM4 16h2v2H4zM8 16h2v2H8zM0 21h2v2H0zM4 21h2v2H4zM8 21h2v2H8zM0 26h2v2H0zM4 26h2v2H4zM8 26h2v2H8zM0 31h2v2H0zM4 31h2v2H4zM8 31h2v2H8z" fill="#173a58"/></svg>
    <div class="tk"><svg width="34" height="34" viewBox="0 0 34 34"><path d="M23 6Q10 2 6 13T12 30Q20 33 26 27T25 16L17 15L19 19L22 20Q21 26 15 25T11 14T20 9L31 6z" fill="#1c86e8"/></svg></div>
    <div class="tk"><svg width="32" height="32" viewBox="0 0 32 32"><circle cx="16" cy="16" r="13" fill="#fff" stroke="#3bb53b" stroke-width="3"/><path d="M8 15H24V18H8z" fill="#3bb53b"/><path d="M8 14Q12 6 22 9M9 21Q15 27 24 21" fill="none" stroke="#3bb53b" stroke-width="3"/><path d="M7 28Q24 26 27 3" fill="none" stroke="#1f8a2f" stroke-width="1.500"/></svg></div>
    <div class="tk nar"><svg width="32" height="30" viewBox="0 0 32 30"><path d="M1 6Q1 3 4 3H12L15 6H30V26Q30 28 28 28H3Q1 28 1 26z" fill="#f6dd8e"/><path d="M2 8H30V12H2z" fill="#fdf0bd"/><path d="M6 1H11V4H6z" fill="#5fc44a"/><path d="M13 2H18V5H13z" fill="#e6552e"/><path d="M21 3H26V6H21z" fill="#3b8ee0"/><path d="M7 19H24V27H20V22H11V27H7z" fill="#7fb3dc"/></svg></div>
    <div class="tk pdf"><svg width="32" height="32" viewBox="0 0 32 32"><rect width="32" height="32" rx="5" fill="#a9581e" stroke="#8a8a8a"/><text class="pdft" x="16" y="22" text-anchor="middle">PDF</text></svg></div>
    <div class="tk act"><svg width="32" height="32" viewBox="0 0 32 32"><rect width="32" height="32" rx="6" fill="#2f73f2"/><path d="M5 12L22 6L27 13L20 14V26L14 20V15L8 16z" fill="#fff"/></svg></div>
    <div class="tray">
      <svg class="tr-dots" width="10" height="34" viewBox="0 0 10 34"><path d="M0 1h2v2H0zM4 1h2v2H4zM8 1h2v2H8zM0 6h2v2H0zM4 6h2v2H4zM8 6h2v2H8zM0 11h2v2H0zM4 11h2v2H4zM8 11h2v2H8zM0 16h2v2H0zM4 16h2v2H4zM8 16h2v2H8zM0 21h2v2H0zM4 21h2v2H4zM8 21h2v2H8zM0 26h2v2H0zM4 26h2v2H4zM8 26h2v2H8zM0 31h2v2H0zM4 31h2v2H4zM8 31h2v2H8z" fill="#12304c"/></svg>
      <span class="ti n"><svg width="16" height="16" viewBox="0 0 16 16"><rect x="1" y="1" width="14" height="14" rx="3" fill="#e8431a" transform="rotate(-8 8 8)"/><path d="M11 4.500H6Q4 4.500 4 6.500T6 8.500H10Q12 8.500 12 10.500T10 12H5" fill="none" stroke="#fff" stroke-width="1.800"/></svg></span>
      <span class="ti n"><svg width="16" height="16" viewBox="0 0 16 16"><circle cx="8" cy="8" r="7.500" fill="#0a1f9e" stroke="#c8d0e0"/><path d="M6 6Q6 4 8 4T10 6Q10 7 8 8.500V10M8 11V12.500" fill="none" stroke="#fff" stroke-width="1.400"/></svg></span>
      <span class="ti n"><svg width="14" height="18" viewBox="0 0 14 18"><path d="M6 1H13V5H11M2 3H9V7H2z" fill="none" stroke="#fff"/><path d="M3 13H11L7 17z" fill="#fff"/></svg></span>
      <span class="ti"><svg width="16" height="16" viewBox="0 0 34 34"><path d="M23 6Q10 2 6 13T12 30Q20 33 26 27T25 16L17 15L19 19L22 20Q21 26 15 25T11 14T20 9L31 6z" fill="#1c96ea"/></svg></span>
      <span class="ti"><svg width="16" height="16" viewBox="0 0 32 32"><circle cx="16" cy="16" r="14" fill="#8fd14f"/><path d="M8 14H24V18H8z" fill="#fff"/><path d="M8 14Q12 6 22 9M9 21Q15 27 24 21" fill="none" stroke="#fff" stroke-width="3"/></svg></span>
      <span class="ti"><svg width="16" height="16" viewBox="0 0 16 16"><rect width="16" height="16" rx="3" fill="#f5a623"/><path d="M4 10Q2 7 5 6T9 8L7 10M12 6Q14 9 11 10T7 8" fill="none" stroke="#fff" stroke-width="1.500"/></svg></span>
      <span class="ti"><svg width="16" height="16" viewBox="0 0 16 16"><rect width="16" height="16" rx="2" fill="#fff"/><path d="M5 5Q8 1 12 5" fill="none" stroke="#1c7fe0" stroke-width="2"/><path d="M2 9H14V15H2z" fill="#f08a1e"/><path d="M2 12H14M6 9V12M10 12V15" stroke="#fff"/></svg></span>
      <span class="ti"><svg width="16" height="16" viewBox="0 0 16 16"><rect x="3" y="0" width="6" height="4" fill="#aaa"/><rect x="2" y="4" width="8" height="8" fill="#777"/><circle cx="11" cy="11" r="5" fill="#1a7a2a"/><path d="M8.500 11L10.500 13L13.500 9" fill="none" stroke="#fff"/></svg></span>
      <span class="ti"><svg width="16" height="16" viewBox="0 0 16 16"><ellipse cx="8" cy="8" rx="8" ry="7" fill="#d9c820"/><circle cx="8" cy="8" r="4.500" fill="#1a8a2a"/><path d="M8 5.500V10.500M5.500 8H10.500" stroke="#fff" stroke-width="1.500"/></svg></span>
      <span class="ti"><svg width="16" height="16" viewBox="0 0 16 16"><path d="M1 5H4L9 1V15L4 11H1z" fill="#e8603a" stroke="#f0c8b0"/><path d="M11 5Q13 8 11 11M13 3Q16 8 13 13" fill="none" stroke="#a02010"/></svg></span>
      <span class="ti"><svg width="16" height="16" viewBox="0 0 16 16"><path d="M1 12h2v3H1zM4.500 10h2v5h-2zM8 7h2v8H8zM11.500 3h2v12h-2z" fill="#fff"/></svg></span>
      <span class="ti"><svg width="16" height="16" viewBox="0 0 16 16"><path d="M1 5H3.500L7 1V15L3.500 11H1z" fill="#fff"/><path d="M9 5Q11 8 9 11M11 3Q14 8 11 13" fill="none" stroke="#fff"/></svg></span>
      <div class="clock"><span>11:35 周六</span><span>2024/3/30</span><b>1</b></div>
      <span class="flag"><svg width="6" height="8" viewBox="0 0 6 8"><path d="M0 0L6 4L0 8z" fill="#222"/></svg></span>
      <span class="showd"></span>
    </div>
  </footer>

  <div class="dialog">
    <div class="dlg-head">
      <span class="dlg-title">选择参数化图形</span>
      <div class="dlg-ctl">
        <svg width="10" height="10" viewBox="0 0 10 10"><rect x=".5" y=".5" width="9" height="9" fill="none" stroke="#444"/></svg>
        <svg width="12" height="12"><use href="#i-x"/></svg>
      </div>
    </div>
    <div class="dlg-grid">
      <div class="dlg-lab">参数化截面类型：</div>
      <div class="dlg-opts">
        <span class="u1">单位：</span><span class="u2">mm</span>
        <i class="radio on"></i><span class="rl">角度放坡形式</span>
        <i class="radio r2"></i><span class="rl">底宽放坡形式</span>
        <button class="pri opt">配筋形式</button>
      </div>
      <div class="thumbs">
        <div class="tgrid">
          <div class="cell cur"><svg class="th" viewBox="0 0 140 140"><rect class="y" x="26.300" y="22.300" width="110.400" height="55.400"/><rect x="67" y="42" width="22" height="13.700" fill="url(#hp)" stroke="#fff"/><path class="k" d="M12.700 22.300V77.700M8 22.300H23M8 77.500H23M26.300 91.300H136.700M26.300 82V96M136.700 82V96"/><text class="ta" transform="rotate(-90 9 49)" x="9" y="49" text-anchor="middle">A</text><text class="ta" x="80.300" y="89" text-anchor="middle">B</text><text class="tl" x="83" y="113.500" text-anchor="middle">矩形承台</text></svg></div>
          <div class="cell"><svg class="th" viewBox="0 0 140 140"><polygon class="y" points="62,32.700 80.700,32.700 120.300,90 111.700,106.300 31,106.300 21.700,90"/><circle class="w" cx="70.700" cy="52" r="9.700"/><circle class="w" cx="46.700" cy="89.700" r="9.700"/><circle class="w" cx="94.700" cy="89.700" r="9.700"/><rect x="63.300" y="70.300" width="15.400" height="10" fill="url(#hp)" stroke="#fff"/><path class="k" d="M62 25.700H80.700M62 22V29M80.700 22V29M129.700 32.700V106.300M126 32.700H132M126 52.300H132M126 90.300H132M126 106.300H132M13 117.300H128.700M25 113V121M31 113V121M47.300 113V121M95.300 113V121M111.300 113V121M117.300 113V121"/><text class="tx" x="70" y="22" text-anchor="middle">x4</text><text class="tx" x="17" y="115" text-anchor="middle">x1</text><text class="tx" x="38" y="115" text-anchor="middle">x2</text><text class="tx" x="70" y="115" text-anchor="middle">x3</text><text class="tx" x="102" y="115" text-anchor="middle">x2</text><text class="tx" x="122" y="115" text-anchor="middle">x1</text><text class="tx" transform="rotate(-90 125 43)" x="125" y="43" text-anchor="middle">y3</text><text class="tx" transform="rotate(-90 125 72)" x="125" y="72" text-anchor="middle">y2</text><text class="tx" transform="rotate(-90 125 100)" x="125" y="100" text-anchor="middle">y1</text><text class="ts" x="72.700" y="131" text-anchor="middle">三桩承台一</text></svg></div>
          <div class="cell"><svg class="th" viewBox="0 0 140 140"><polygon class="y" points="60,28.300 78.300,28.300 118.300,86.700 110.300,103.300 29.300,103.300 19.700,86.700"/><circle class="w" cx="69" cy="48.700" r="9.700"/><circle class="w" cx="44.700" cy="86.700" r="9.700"/><circle class="w" cx="93" cy="86.700" r="9.700"/><rect x="62.300" y="66.300" width="16" height="9" fill="url(#hp)" stroke="#fff"/><path class="k" d="M60 22.300H78.300M60 19V26M78.300 19V26M127.300 28.300V103.300M123 28.300H130M123 49.300H130M123 87.300H130M123 103.300H130M11 113.700H126.700M23.300 109V118M29.300 109V118M45.700 109V118M93.700 109V118M109.700 109V118M115.700 109V118"/><text class="tx" x="68" y="19" text-anchor="middle">x4</text><text class="tx" x="15" y="111.500" text-anchor="middle">x1</text><text class="tx" x="36" y="111.500" text-anchor="middle">x2</text><text class="tx" x="68" y="111.500" text-anchor="middle">x3</text><text class="tx" x="100" y="111.500" text-anchor="middle">x2</text><text class="tx" x="120" y="111.500" text-anchor="middle">x1</text><text class="tx" transform="rotate(-90 123 40)" x="123" y="40" text-anchor="middle">y3</text><text class="tx" transform="rotate(-90 123 69)" x="123" y="69" text-anchor="middle">y2</text><text class="tx" transform="rotate(-90 123 96)" x="123" y="96" text-anchor="middle">y1</text><text class="ts" x="70.700" y="127.300" text-anchor="middle">三桩承台二</text></svg></div>
          <div class="cell"><svg class="th" viewBox="0 0 140 140"><text class="tb" x="70" y="29" text-anchor="middle">阶式四桩台</text><rect class="oy" x="43.300" y="45.300" width="65.400" height="64.400"/><rect x="71.300" y="70.300" width="9.400" height="14.400" fill="url(#hy)" stroke="#b4b65a"/><path class="d" marker-start="url(#ar)" marker-end="url(#ar)" d="M33 46V109"/><path class="d" d="M26 45.300H40M26 109.300H40M43.300 112V125M108 112V125"/><path class="d" marker-start="url(#ar)" marker-end="url(#ar)" d="M44 118.700H107"/><text class="tA" x="21.700" y="80" text-anchor="middle">A</text><text class="tA" x="78" y="134" text-anchor="middle">A</text></svg></div>
          <div class="cell"><svg class="th" viewBox="0 0 140 140"><text class="tb" x="70" y="29" text-anchor="middle">阶式五桩台</text><polygon class="oy" points="83,43.300 118.700,68 105.300,107.700 60.700,107.700 47,68"/><rect x="75.300" y="71" width="15.400" height="9.300" fill="url(#hy)" stroke="#b4b65a"/><path class="d" marker-start="url(#ar)" marker-end="url(#ar)" d="M39.700 45V108"/><path class="d" d="M33 44.300H47M33 108.300H47M60.700 111V124M105.300 111V124"/><path class="d" marker-start="url(#ar)" marker-end="url(#ar)" d="M61 117.700H105"/><text class="tA" transform="rotate(-90 29 73)" x="29" y="73" text-anchor="middle">A</text><text class="tf" x="88.700" y="132" text-anchor="middle" textLength="80" lengthAdjust="spacing">B=A/1.5385</text></svg></div>
          <div class="cell"><svg class="th" viewBox="0 0 140 140"><text class="tb" x="70" y="29" text-anchor="middle">阶式六桩台</text><polygon class="oy" points="68.300,43.300 106.300,43.300 124,75.700 106,107 68.700,107 50.700,75.700"/><rect x="80" y="70.300" width="14.700" height="8.700" fill="url(#hy)" stroke="#b4b65a"/><path class="d" marker-start="url(#ar)" marker-end="url(#ar)" d="M46.300 44V107"/><path class="d" d="M39 43.300H54M39 107.300H54M68.700 110V124M105 110V124"/><path class="d" marker-start="url(#ar)" marker-end="url(#ar)" d="M69 117H105"/><text class="tA" transform="rotate(-90 35 70)" x="35" y="70" text-anchor="middle">A</text><text class="tf" x="90.700" y="132" text-anchor="middle" textLength="80" lengthAdjust="spacing">B=A/1.7326</text></svg></div>
          <div class="cell"><svg class="th" viewBox="0 0 140 140"><use href="#t-uneq"/><text class="ts" x="84" y="133" text-anchor="middle">不等边承台一</text></svg></div>
          <div class="cell"><svg class="th" viewBox="0 0 140 140"><polygon class="y" points="51,23.300 65.300,23.300 125.300,62 125.300,86.300 21.300,86.300 21.300,65.700"/><circle class="w" cx="61" cy="38" r="8"/><circle class="w" cx="40" cy="74" r="8"/><circle class="w" cx="107" cy="74" r="8"/><rect x="57.300" y="54.300" width="11.400" height="8" fill="url(#hp)" stroke="#fff"/><path class="k" d="M34 17.700H73.700M51 14V21M61 14V21M65.300 14V21M14.700 23.300V86.300M11 23.300H17M11 38H17M11 66H17M11 73H17M11 86.300H17M21.300 93.300H125.300M21.300 89V97M40 89V97M61 89V97M107 89V97M125.300 89V97M136 62V74M132 62H139M132 74H139"/><text class="tx" x="37" y="15" text-anchor="middle">x5</text><text class="tx" x="69" y="15" text-anchor="middle">x6</text><text class="tx" x="28.700" y="91.500" text-anchor="middle">x1</text><text class="tx" x="48.700" y="91.500" text-anchor="middle">x2</text><text class="tx" x="82.700" y="91.500" text-anchor="middle">x3</text><text class="tx" x="114.700" y="91.500" text-anchor="middle">x4</text><text class="tx" transform="rotate(-90 11 31)" x="11" y="31" text-anchor="middle">y4</text><text class="tx" transform="rotate(-90 11 53)" x="11" y="53" text-anchor="middle">y3</text><text class="tx" transform="rotate(-90 11 71)" x="11" y="71" text-anchor="middle">y2</text><text class="tx" transform="rotate(-90 11 81)" x="11" y="81" text-anchor="middle">y1</text><text class="tx" transform="rotate(-90 133 68)" x="133" y="68" text-anchor="middle">y5</text><text class="ts" x="78" y="114" text-anchor="middle">不等边承台二</text></svg></div>
          <div class="cell"><svg class="th" viewBox="0 0 140 140"><use href="#t-uneq" transform="translate(-2 -1)"/><text class="ts" x="76" y="132" text-anchor="middle">不等边承台三</text></svg></div>
          <div class="cell"><div class="th"></div></div><div class="cell"><div class="th"></div></div><div class="cell"><div class="th"></div></div>
        </div>
        <span class="tscroll"></span>
      </div>
      <div class="pic">
        <svg width="807" height="471" viewBox="968 303 807 471">
          <path class="wl" d="M970 425V729M968 425H972M971 746V766M968 758L974 752"/>
          <path class="wl" d="M1125.500 411.500H1555.500V592.300H1125.500z"/>
          <path class="rd" d="M1135 474V418.500H1544V474M1135 502V558.500H1544V502M1135 704V760.500H1544V704"/>
          <g class="yd"><circle cx="1141.600" cy="420.500" r="1.800"/><circle cx="1162.600" cy="420.500" r="1.800"/><circle cx="1183.600" cy="420.500" r="1.800"/><circle cx="1204.600" cy="420.500" r="1.800"/><circle cx="1225.600" cy="420.500" r="1.800"/><circle cx="1246.600" cy="420.500" r="1.800"/><circle cx="1267.600" cy="420.500" r="1.800"/><circle cx="1288.600" cy="420.500" r="1.800"/><circle cx="1309.600" cy="420.500" r="1.800"/><circle cx="1330.600" cy="420.500" r="1.800"/><circle cx="1351.600" cy="420.500" r="1.800"/><circle cx="1372.600" cy="420.500" r="1.800"/><circle cx="1393.600" cy="420.500" r="1.800"/><circle cx="1414.600" cy="420.500" r="1.800"/><circle cx="1435.600" cy="420.500" r="1.800"/><circle cx="1456.600" cy="420.500" r="1.800"/><circle cx="1477.600" cy="420.500" r="1.800"/><circle cx="1498.600" cy="420.500" r="1.800"/><circle cx="1519.600" cy="420.500" r="1.800"/><circle cx="1540.600" cy="420.500" r="1.800"/><circle cx="1141.600" cy="553.500" r="1.800"/><circle cx="1162.600" cy="553.500" r="1.800"/><circle cx="1183.600" cy="553.500" r="1.800"/><circle cx="1204.600" cy="553.500" r="1.800"/><circle cx="1225.600" cy="553.500" r="1.800"/><circle cx="1246.600" cy="553.500" r="1.800"/><circle cx="1267.600" cy="553.500" r="1.800"/><circle cx="1288.600" cy="553.500" r="1.800"/><circle cx="1309.600" cy="553.500" r="1.800"/><circle cx="1330.600" cy="553.500" r="1.800"/><circle cx="1351.600" cy="553.500" r="1.800"/><circle cx="1372.600" cy="553.500" r="1.800"/><circle cx="1393.600" cy="553.500" r="1.800"/><circle cx="1414.600" cy="553.500" r="1.800"/><circle cx="1435.600" cy="553.500" r="1.800"/><circle cx="1456.600" cy="553.500" r="1.800"/><circle cx="1477.600" cy="553.500" r="1.800"/><circle cx="1498.600" cy="553.500" r="1.800"/><circle cx="1519.600" cy="553.500" r="1.800"/><circle cx="1540.600" cy="553.500" r="1.800"/></g>
          <g class="md"><circle cx="1541.700" cy="504" r="1.800"/><circle cx="1541.700" cy="518" r="1.800"/><circle cx="1541.700" cy="534" r="1.800"/></g>
          <path class="wl" d="M1261 379.700H1215.500V429"/>
          <path class="wl" d="M1492 383H1411.500L1398 418M1432 383L1418 418M1453 383L1439 418M1474 383L1460 418"/>
          <path class="wl" d="M1268 491.500H1233.700V562"/>
          <path class="wl" d="M1456.500 540H1390L1372.400 555M1411 540L1394 555M1432 540L1414 555M1453 540L1435.600 555"/>
          <path class="wl" d="M1523.500 475V513L1541.700 534M1523.500 483L1541.700 504M1523.500 497L1541.700 518"/>
          <path class="wl" d="M1105 409V594M1095.500 411.500H1115M1095.500 592H1115M1100 407L1110 416M1100 588L1110 597"/>
          <path class="wl" d="M1575 417V477M1565 419.500H1585M1565 475.500H1585M1570 415L1580 424M1570 471L1580 480"/>
          <path class="wl" d="M1570.600 502V561M1562 503.500H1585M1562 559.500H1585"/>
          <path class="wl" d="M1394 563V597M1383 566.500H1398M1383 592.500H1398M1390 589L1398 597"/>
          <path class="wl" d="M1303.500 565.500H1362.500V729M1303.500 565.500V729M1285 729H1324L1331 718V739L1338 729H1376"/>
          <path class="wl2" d="M974 631H1030"/>
          <text class="big1" x="1003" y="624" text-anchor="middle">1</text>
          <text class="cn" x="1150" y="371">横向面筋</text><text class="en" x="1247.600" y="372" textLength="35" lengthAdjust="spacingAndGlyphs">XMJ</text>
          <text class="cn" x="1395" y="376">纵向面筋</text><text class="en" x="1495.600" y="377" textLength="35" lengthAdjust="spacingAndGlyphs">YMJ</text>
          <text class="cn" x="1195" y="483">横向底筋</text><text class="en" x="1292" y="484" textLength="83" lengthAdjust="spacingAndGlyphs">C16@150</text>
          <text class="cn" x="1353.700" y="532">纵向底筋</text><text class="en" x="1450" y="533" textLength="84" lengthAdjust="spacingAndGlyphs">C16@150</text>
          <text class="cn" transform="rotate(-90 1494 507)" x="1494" y="507" textLength="67" lengthAdjust="spacing">侧面筋</text>
          <text class="en2" transform="rotate(-90 1519 511)" x="1519" y="511" textLength="82" lengthAdjust="spacingAndGlyphs">C12@200</text>
          <text class="dg" transform="rotate(-90 1094 517)" x="1094" y="517" textLength="34" lengthAdjust="spacingAndGlyphs">800</text>
          <text class="dg" transform="rotate(-90 1599 452)" x="1599" y="452" textLength="12" lengthAdjust="spacingAndGlyphs">0</text>
          <text class="dg" transform="rotate(-90 1599 552)" x="1599" y="552" textLength="44" lengthAdjust="spacingAndGlyphs">1000</text>
          <text class="dg" transform="rotate(-90 1419 592)" x="1419" y="592" textLength="31" lengthAdjust="spacingAndGlyphs">100</text>
        </svg>
      </div>
    </div>
    <div class="dlg-foot"><button class="pri ok">确定</button><button class="ghost">取消</button></div>
    <svg class="rsz" width="9" height="9" viewBox="0 0 9 9"><path d="M7 1h2v2H7zM4 4h2v2H4zM7 4h2v2H7zM1 7h2v2H1zM4 7h2v2H4zM7 7h2v2H7z" fill="#888"/></svg>
  </div>
</div>
</body>
</html>
```
FILE: styles.css
```css
* { box-sizing: border-box; }
html, body { margin: 0; padding: 0; width: 1920px; height: 1080px; overflow: hidden; }
body { font: 12px/16px "Noto Sans", "Noto Sans CJK SC", sans-serif; color: #333; background: #fff; }
.defs { position: absolute; }
button { font: inherit; }
i, em, u { font-style: normal; text-decoration: none; }
svg { display: block; flex: none; }
.app { position: relative; display: flex; flex-direction: column; width: 1920px; height: 1080px; }
.caret { display: inline-block; width: 0; height: 0; border: 3px solid transparent; border-top: 4px solid #666; border-bottom: 0; flex: none; }
.caret.lt { border-top-color: #ccc; }

/* title */
.titlebar { display: grid; grid-template-columns: 1fr auto 1fr; height: 34px; align-items: start; }
.quick { display: flex; height: 26px; align-items: center; }
.qi { width: 34px; display: flex; justify-content: center; align-items: center; }
.q-logo { width: 35px; justify-content: flex-start; padding-left: 6px; }
.q-undo { width: 38px; gap: 3px; }
.q-redo { width: 32px; gap: 3px; }
.q-sum { width: 31px; }
.q-drop { width: 16px; }
.title { height: 26px; line-height: 26px; font-size: 12.400px; white-space: nowrap; color: #333; }
.winctl { display: flex; justify-content: flex-end; height: 22px; align-items: center; padding-right: 1px; color: #555; }
.wc { width: 34px; display: flex; justify-content: center; }
.wc:nth-child(2) { width: 36px; }

/* menu */
.menubar { display: flex; height: 22px; padding-left: 20px; gap: 19.600px; border-bottom: 1px solid #eee; align-items: flex-start; }
.tab { height: 21px; padding: 0 3px; line-height: 20px; font-size: 13px; color: #444; }
.tab.on { color: #2a7de1; border-bottom: 2px solid #2a7de1; }
.mright { margin-left: auto; display: flex; align-items: center; height: 20px; padding-right: 6px; margin-top: 1px; }
.topsearch { width: 318px; height: 17px; border: 1px solid #e4e4e4; display: flex; justify-content: space-between; align-items: center; padding: 1px 6px 0 4px; color: #222; font-size: 12px; margin-right: 7px; }
.topsearch .mg { color: #aaa; }
.uname { width: 24px; color: #555; padding-top: 1px; }
.mi.m1 { margin-left: 17px; }
.mi.m2 { margin-left: 8px; }
.mhelp { margin-left: 9px; width: 15px; display: flex; align-items: center; gap: 1px; font-size: 14px; color: #555; }
.mi.m3 { margin-left: 10px; }
.mi.m4 { margin-left: 8px; }

/* ribbon */
.ribbon { display: grid; grid-template-columns: 234px 77px 152px 152px 198px 282px 82px 70px 58px 78px; height: 100px; padding-bottom: 4px; justify-content: start; }
.grp { display: flex; flex-direction: column; border-right: 1px solid #dcdcdc; padding-top: 6px; height: 96px; }
.grp-body { flex: 1; display: flex; padding-left: 10px; gap: 10px; }
.grp-name { height: 17px; line-height: 20px; text-align: center; color: #444; }
.rb { display: flex; flex-direction: column; align-items: center; color: #333; white-space: nowrap; }
.rb span { margin-top: 6px; line-height: 18px; }
.rb.off, .sm.off { color: #bdbdbd; }
.g1 .grp-body { padding-left: 16px; gap: 14px; }
.rb-sel { width: 24px; }
.smcol { display: flex; flex-direction: column; gap: 4px; margin-top: 1px; width: 86px; }
.smcol + .smcol { margin-left: -2px; width: 70px; }
.sm { display: flex; align-items: center; gap: 4px; height: 20px; white-space: nowrap; }
.sm span { padding-top: 1px; }

/* toolbar */
.toolbar { display: flex; align-items: center; height: 32px; background: #f4fafd; border-top: 1px solid #8ec5f5; border-bottom: 1px solid #b3d3ec; }
.combo { width: 100px; height: 100%; display: flex; justify-content: space-between; align-items: center; padding: 1px 6px 0 3px; border-right: 1px solid #dbe4ea; }
.tb-check { width: 14px; height: 14px; border: 1px solid #999; border-radius: 2px; background: #fff; margin-left: 11px; }
.tb-l1 { margin-left: 3px; width: 36px; white-space: nowrap; padding-top: 1px; }
.tb-l2 { margin-left: 11px; width: 27px; color: #999; white-space: nowrap; }
.tb-in { height: 24px; border: 1px solid #ddd; border-radius: 3px; background: #fff; padding-left: 3px; line-height: 22px; color: #999; display: flex; justify-content: space-between; align-items: center; }
.tb-in.dis { width: 80px; background: #e6e6e6; border-color: #ccc; }
.tb-deg { width: 15px; padding-left: 2px; color: #999; }
.tb-sel { width: 58px; height: 24px; border: 1px solid #ddd; border-radius: 3px; background: #fff; display: flex; justify-content: space-between; align-items: center; padding: 0 6px 0 3px; }
.tb-x { margin-left: 11px; width: 17px; color: #999; }
.sx { width: 54px; }
.tb-mm { margin-left: 8px; width: 32px; color: #999; }
.tb-y { width: 16px; color: #999; }
.sy { width: 62px; }
.tb-mm2 { color: #999; margin-left: 1px; }
.spin { width: 8px; height: 14px; margin-right: 2px; position: relative; }
.spin::before, .spin::after { content: ""; position: absolute; left: 1px; border: 3px solid transparent; }
.spin::before { top: -2px; border-bottom: 3px solid #555; }
.spin::after { bottom: -2px; border-top: 3px solid #555; }

/* workspace */
.workspace { display: flex; height: 822px; }
.pnl-head { display: flex; align-items: center; height: 29px; background: #eeeff1; padding-left: 6px; flex: none; }
.grip { margin-right: 12px; }
.pnl-title { color: #555; font-size: 12px; flex: 1; padding-top: 2px; }
.pclose { color: #aaa; margin-right: 9px; margin-left: auto; }

.nav { width: 201px; height: 820px; border-right: 1px solid #ccc; border-left: 1px solid #ccc; border-bottom: 1px solid #ccc; display: flex; flex-direction: column; }
.nav-body { flex: 1; display: flex; min-height: 0; }
.nav-list { width: 187px; background: #f6f7f9; display: flex; flex-direction: column; }
.nv { height: 42px; flex: none; background: #f6f7f9; display: flex; align-items: center; padding-left: 11px; color: #444; }
.nv > svg:first-child { width: 26px; margin-right: 12px; }
.nv > span { padding-top: 2px; }
.nv .lock { margin-left: 9px; }
.nv.cur { background: #ecedf0; color: #5f8fe8; }
.trial { margin-left: auto; align-self: flex-start; margin-top: 5px; height: 19px; width: 55px; line-height: 20px; padding-left: 8px; border-radius: 9px 0 0 9px; background: linear-gradient(90deg, #f3cf9b, #edbc68); color: #7c4b12; font-weight: normal; font-size: 11px; white-space: nowrap; overflow: hidden; }
.sub { height: 28px; line-height: 30px; padding-left: 21px; flex: none; color: #444; background: #fff; }
.sub.act { color: #2a7de1; }
.vtrack { width: 4px; margin: 274px 0 12px 4px; background: #f0f0f0; }

.midcol { width: 319px; margin-left: 4px; height: 820px; display: flex; flex-direction: column; gap: 4px; }
.pa { height: 311px; border: 1px solid #ccc; border-top: 0; border-right-color: #ddd; flex: none; }
.tabs { padding-left: 6px; }
.tabs .grip { margin-right: 9px; }
.ptab { width: 68px; height: 29px; line-height: 31px; text-align: center; color: #444; }
.ptab.on { background: #fff; color: #2a7de1; }
.tools { display: flex; gap: 9px; padding: 7px 0 0 10px; }
.tbtn { width: 32px; height: 26px; background: #f5f6f8; border-radius: 3px; display: flex; justify-content: center; align-items: center; }
.tbtn.new { width: 45px; background: #d9ebfb; padding-right: 10px; justify-content: flex-start; padding-left: 8px; gap: 13px; }
.tbtn.extra { width: 25px; margin-left: 8px; background: #ececec; }
.csearch { margin: 7px 0 0 8px; width: 300px; height: 26px; border-radius: 13px; background: #f5f6f8; color: #999; line-height: 27px; padding-left: 12px; }
.tree-root { display: flex; align-items: center; gap: 4px; margin: 13px 0 0 6px; color: #333; height: 18px; font-size: 12.500px; }
.tri { width: 0; height: 0; border: 3px solid transparent; border-top: 4px solid #999; border-bottom: 0; display: inline-block; }
.tri.r { border: 3px solid transparent; border-left: 4px solid #999; border-right: 0; }
.pill { margin: 4px 0 0 21px; width: 89px; height: 21px; border-radius: 3px; background: #bcd6f1; line-height: 22px; color: #3b4a5c; padding-left: 3px; white-space: nowrap; font-size: 12.500px; }

.pb { flex: 1; min-height: 0; display: flex; flex-direction: column; border: 1px solid #ccc; border-bottom: 0; border-right-color: #ddd; }
.pb .pnl-head { height: 30px; border-bottom: 1px solid #ddd; }
.pb .ptab { height: 28px; line-height: 28px; margin-top: 1px; }
.ptable { flex: 1; min-height: 0; overflow: hidden; position: relative; }
.ptable::after { content: ""; position: absolute; right: 4px; top: 60px; bottom: 60px; width: 3px; background: #eee; }
.phead { display: flex; height: 24px; background: #f0f0f0; border-bottom: 1px solid #ddd; line-height: 24px; width: 317px; }
.phead span { width: 107px; text-align: center; border-right: 1px solid #ddd; color: #444; }
.phead b { width: 153px; text-align: center; border-right: 1px solid #ddd; color: #333; }
.sect { height: 25px; width: 300px; background: #efefef; display: flex; align-items: center; padding-left: 11px; gap: 6px; color: #444; }
.sect.s2 { height: 24px; border-bottom: 1px solid #fff; }
.prow { height: 25px; display: flex; align-items: center; position: relative; }
.prow label { width: 108px; padding-left: 15px; white-space: nowrap; color: #444; }
.prow label.bl { color: #2a6fe0; }
.pv { width: 151px; height: 21px; border: 1px solid #e3e3e3; padding-left: 2px; line-height: 19px; color: #444; white-space: nowrap; overflow: hidden; }
.pv.gr { color: #999; }
.pv.sel { border-color: #5d90e6; display: flex; justify-content: space-between; align-items: center; padding: 0 2px; }
.pv.sel em { width: 16px; height: 15px; border: 1px solid #5d90e6; border-radius: 3px; background: #eef5fd; color: #3b7be0; line-height: 11px; text-align: center; font-weight: bold; }
.dot { position: absolute; left: 276px; width: 8px; height: 8px; border-radius: 50%; background: #d8d8d8; border: 1px solid #c8c8c8; }
.pb-foot { height: 30px; flex: none; padding: 4px 0 0 6px; background: #fff; border-top: 1px solid #ddd; }
.pbtn { width: 79px; height: 23px; border: 1px solid #ccc; border-radius: 3px; background: #fff; color: #444; padding: 1px 0 0; }

.canvas { width: 1113px; position: relative; background: #000; height: 822px; flex: none; }
.cv { position: absolute; left: 0; top: 0; }
.cv2 { fill: #e8e8e8; font: 15px "Noto Sans", sans-serif; }
.cvy { fill: #00d000; font: 12px "Noto Sans", sans-serif; }
.cvx { fill: #e01010; font: 12px "Noto Sans", sans-serif; }
.side { position: absolute; left: 1080px; top: 0; width: 32px; height: 60px; background: #fff; padding: 10px 0 0 3px; border-bottom: 1px solid #888; }

.rpanel { width: 283px; flex: none; height: 820px; border-left: 1px solid #ccc; border-bottom: 1px solid #ccc; display: flex; flex-direction: column; background: #fff; }
.rpanel .pnl-head { height: 30px; }
.rt { padding-left: 3px; }
.rtabs { display: flex; height: 29px; padding: 3px 0 0 6px; border-bottom: 1px solid #ccc; gap: 4px; }
.rtab { width: 60px; height: 25px; border: 1px solid #ddd; border-radius: 3px 3px 0 0; background: #ddd; text-align: center; line-height: 23px; color: #444; }
.rtab.on { background: #fff; color: #2a7de1; }
.rtable { margin: 0 2px 0 6px; height: 723px; overflow: hidden; border: 1px solid #ccc; border-top: 0; padding-top: 1px; }
.rt-head, .tr { display: grid; grid-template-columns: 132px 63px 63px; height: 21px; border-bottom: 1px solid #ddd; }
.rt-head span { border-right: 1px solid #ddd; text-align: center; color: #444; line-height: 21px; }
.tr > i { border-right: 1px solid #ddd; display: block; position: relative; line-height: 21px; white-space: nowrap; color: #333; }
.leaf > i { padding-left: 39px; }
.leaf > i::before { content: ""; position: absolute; left: 6px; width: 12px; top: -1px; bottom: -1px; border-left: 1px solid #e4e4e4; border-right: 1px solid #ddd; }
.leaf > i::after { content: ""; position: absolute; left: 18px; top: 10px; width: 15px; border-top: 1px solid #ddd; }
.fold > i { padding-left: 31px; }
.fold > i::before { content: ""; position: absolute; left: 6px; top: -1px; bottom: -1px; border-left: 1px solid #e4e4e4; }
.fold u { position: absolute; left: 11px; top: 3px; width: 13px; height: 13px; border: 1px solid #888; border-radius: 2px; background: #fff; line-height: 10px; text-align: center; }
.cb { display: block; width: 13px; height: 13px; border: 1px solid #8a8a8a; border-radius: 2px; margin: 3px 0 0 25px; position: relative; background: #fff; }
.tr > .cb::after { content: ""; position: absolute; top: -4px; left: 36px; height: 21px; border-left: 1px solid #ddd; }
.cb.lt { border-color: #ccc; background: #f1f1f1; }
.cb.mix { border-color: #5d90e6; background: #8fc0f8; box-shadow: inset 0 0 0 1px #fff; }
.cb.on { border-color: #4a8be8; background: #4a8be8; }
.cb.on::before { content: ""; position: absolute; left: 3px; top: 0; width: 5px; height: 8px; border: solid #fff; border-width: 0 1.500px 1.500px 0; transform: rotate(40deg); }
.rfoot { display: flex; justify-content: flex-end; padding: 7px 9px 0 0; }
.rbtn { width: 90px; height: 26px; border: 1px solid #d0d0d0; border-radius: 3px; background: #fff; color: #444; padding: 1px 0 0; }

/* status */
.status { display: flex; align-items: center; height: 30px; background: #fcfcfc; }
.st { white-space: nowrap; color: #444; }
.st.s1 { width: 91px; padding-left: 2px; }
.st.s2 { width: 140px; }
.st.s3 { width: 110px; }
.st.s4 { width: 110px; }
.stools { display: flex; align-items: center; }
.sbtn { height: 24px; border: 1px solid #aaa; border-radius: 3px; background: #fff; display: flex; align-items: center; justify-content: center; gap: 4px; flex: none; }
.w24 { width: 24px; }
.w25 { width: 25px; }
.w36 { width: 36px; }
.sbtn.sel { background: #d9e8fb; border-color: #5d90e6; margin-left: 4px; }
.m6 { margin-left: 6px; }
.m7 { margin-left: 7px; }
.m3 { margin-left: 3px; }
.m4 { margin-left: 4px; }
.expand { margin-left: 16px; }
.done { margin-left: auto; display: flex; align-items: center; gap: 6px; padding-right: 12px; color: #444; }

/* taskbar */
.taskbar { display: flex; align-items: center; height: 40px; border-top: 1px solid #2a4e6c; background: linear-gradient(90deg, #1f6098 0, #3d8cc4 210px, #66b2de 420px, #58a6d6 800px, #3584c0 1150px, #1f5f99 1450px, #1d4a7c 1700px, #1c4677 100%); }
.orb { width: 54px; display: flex; justify-content: center; }
.tdots { margin-left: 3px; margin-right: 9px; }
.tk { width: 57px; height: 38px; margin-right: 5px; display: flex; align-items: center; justify-content: center; border: 1px solid rgba(20, 50, 80, .7); box-shadow: inset 0 0 0 1px rgba(255, 255, 255, .35); border-radius: 2px; background: linear-gradient(rgba(255, 255, 255, .25), rgba(255, 255, 255, .08)); }
.tk.nar { width: 53px; margin-right: 9px; }
.tk.act { width: 58px; background: linear-gradient(rgba(255, 255, 255, .55), rgba(255, 255, 255, .3)); }
.pdft { fill: #e8c8a0; font: bold 11px "Liberation Sans", sans-serif; }
.tray { margin-left: auto; display: flex; align-items: center; height: 100%; color: #fff; padding-right: 2px; }
.tr-dots { margin-right: 9px; }
.ti { width: 24px; display: flex; justify-content: center; flex: none; }
.ti.n { width: 22px; }
.clock { width: 70px; margin-left: 12px; position: relative; display: flex; flex-direction: column; gap: 1px; font-size: 12.500px; line-height: 16px; white-space: nowrap; color: #f0f5fa; }
.clock b { position: absolute; left: 57px; top: 0; width: 12px; height: 12px; border-radius: 50%; background: #e81020; color: #fff; font-size: 9px; line-height: 12px; text-align: center; }
.flag { width: 16px; height: 16px; background: #fff; display: flex; align-items: center; justify-content: center; margin-left: 5px; }
.showd { width: 13px; height: 38px; margin-left: 12px; border: 1px solid #6f9cc0; background: linear-gradient(#4f86ad, #2a5f8a); }

/* dialog */
.dialog { position: absolute; left: 477px; top: 231px; width: 1310px; height: 586px; background: #fff; border: 1px solid #a8a8a8; box-shadow: 5px 6px 12px rgba(0, 0, 0, .55), -3px 3px 8px rgba(0, 0, 0, .3); padding-left: 10px; display: flex; flex-direction: column; }
.dlg-head { height: 39px; display: flex; justify-content: space-between; align-items: flex-start; padding-top: 9px; color: #444; }
.dlg-title { font-size: 13px; line-height: 18px; }
.dlg-ctl { display: flex; align-items: center; gap: 18px; padding: 5px 13px 0 0; color: #555; }
.dlg-grid { display: grid; grid-template-columns: 474px 807px; column-gap: 6px; grid-template-rows: 32px 471px; }
.dlg-lab { font-size: 12px; padding-top: 5px; color: #444; }
.dlg-opts { display: flex; align-items: flex-start; font-size: 12px; color: #444; }
.u1 { margin-top: 6px; width: 42px; white-space: nowrap; }
.u2 { margin-top: 6px; width: 30px; }
.radio { width: 13px; height: 13px; border: 1px solid #888; border-radius: 50%; margin-top: 6px; margin-right: 4px; background: #fff; position: relative; flex: none; }
.radio.r2 { margin-left: 8px; }
.radio.on::after { content: ""; position: absolute; left: 2.500px; top: 2.500px; width: 6px; height: 6px; border-radius: 50%; background: #2a7de1; }
.rl { margin-top: 5px; width: 72px; white-space: nowrap; }
.pri { background: #2f80e6; color: #fff; border: 0; border-radius: 3px; padding: 1px 0 0; }
.opt { width: 80px; height: 26px; margin-left: auto; }
.thumbs { position: relative; border: 2px solid #c8c8c8; overflow: hidden; height: 471px; background: #fff; }
.tgrid { display: grid; grid-template-columns: repeat(3, 153px); grid-auto-rows: 153px; width: 459px; }
.cell { padding: 5px 6px 6px 5px; border-right: 2px solid #ddd; border-bottom: 2px solid #ddd; }
.cell.cur { box-shadow: inset 0 0 0 2px #1a8fff, inset 0 0 0 5px #9ccbfb; }
.th { width: 140px; height: 140px; background: #6e93a9; display: block; }
.tscroll { position: absolute; left: 463px; top: 11px; width: 4px; height: 222px; background: #eee; }
.y { fill: none; stroke: #ff0; stroke-width: 1; }
.oy { fill: none; stroke: #b4b65a; stroke-width: 1; }
.w { fill: none; stroke: #fff; stroke-width: .9; }
.k { fill: none; stroke: #000; stroke-width: .9; }
.d { fill: none; stroke: #2c3c48; stroke-width: .9; }
.tx { fill: #fff; font: bold 6px "Liberation Serif", serif; }
.ta { fill: #fff; font: 11px "Liberation Serif", serif; }
.tA { fill: #e8eef2; font: 15px "Liberation Serif", serif; }
.tf { fill: #f0f4f6; font: 12px "Liberation Mono", monospace; }
.tl { fill: #2f2f85; font: 14px "Noto Sans CJK SC", sans-serif; }
.ts { fill: #33338a; font: 10px "Noto Sans CJK SC", sans-serif; }
.tb { fill: #3d3d8f; font: 20px "Noto Sans CJK SC", sans-serif; }
.pic { background: #000; height: 471px; overflow: hidden; }
.wl { fill: none; stroke: #fff; stroke-width: 1; }
.wl2 { stroke: #fff; stroke-width: 1.200; }
.rd { fill: none; stroke: #f00; stroke-width: 2; }
.yd { fill: #ff0; }
.md { fill: #f0f; }
.cn { fill: #fff; font: 300 23px "Noto Sans CJK SC", sans-serif; }
.en { fill: #00d800; font: 29px "Liberation Serif", serif; }
.en2 { fill: #00d800; font: 23px "DejaVu Serif", serif; }
.dg { fill: #00d800; font: 20px "DejaVu Serif", serif; }
.big1 { fill: #fff; font: 50px "Liberation Serif", serif; }
.dlg-foot { height: 41px; display: flex; justify-content: flex-end; gap: 7px; padding: 6px 11px 0 0; }
.ok { width: 80px; height: 26px; }
.ghost { width: 79px; height: 26px; border: 1px solid #ccc; border-radius: 3px; background: #fff; color: #333; padding: 1px 0 0; }
.rsz { position: absolute; right: 1px; bottom: 1px; }
```
